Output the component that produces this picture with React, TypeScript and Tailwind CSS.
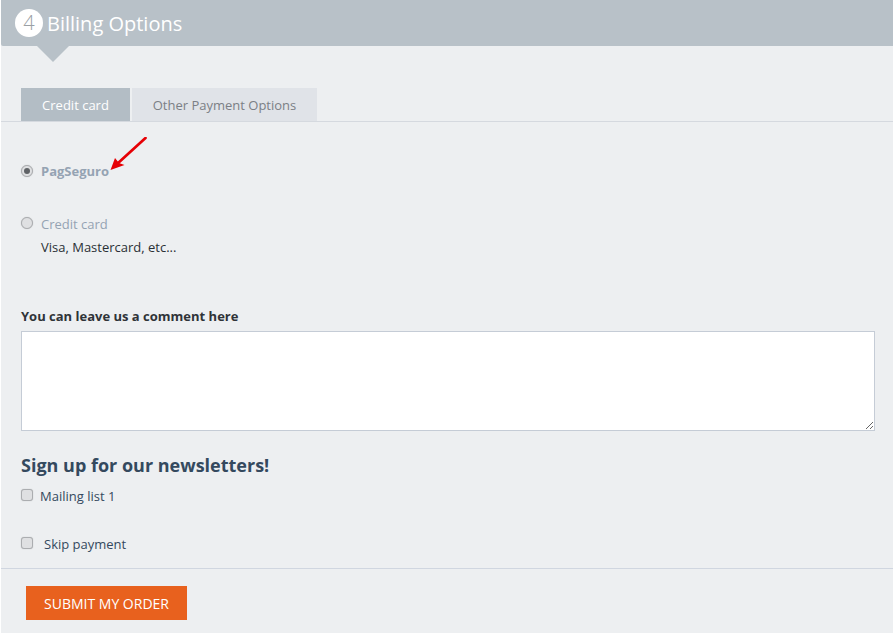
const font = "font-['Open_Sans',sans-serif]";
const control = 'm-0 h-3 w-3 shrink-0 appearance-none border border-[#abadb0] bg-[#dfe0e2] shadow-[0_0_1px_rgba(0,0,0,0.25)]';

function Radio({ checked }: { checked?: boolean }) {
	return (
		<span className="relative flex h-3 w-3 shrink-0 items-center justify-center">
			<input type="radio" name="pay" defaultChecked={checked} className={`${control} rounded-full`} />
			{checked && <span className="absolute h-[6px] w-[6px] rounded-full bg-[#5f6266]" />}
		</span>
	);
}

export default function App() {
	return (
		<div className={`${font} h-[633px] w-[893px] overflow-hidden border-l border-white bg-[#edeff1] text-[13px]`}>
			{/* Step header */}
			<div className="flex h-[46px] items-center gap-1 rounded-bl-[2px] bg-[#b8c1c8] pl-[14px]">
				<span className="flex h-7 w-7 items-center justify-center rounded-full bg-white text-[20px] font-light text-[#9aa0a5]">4</span>
				<h2 className="pt-[2px] text-[20px] leading-none text-white">Billing Options</h2>
			</div>
			<div className="ml-9 h-0 w-0 border-x-[16px] border-t-[16px] border-x-transparent border-t-[#b8c1c8]" />

			{/* Payment tabs */}
			<div className="mt-[26px] flex gap-[2px] border-b border-[#d5d9df] pl-5">
				<div className="flex h-[33px] w-[109px] items-center justify-center bg-[#b3bdc5] pt-[2px] text-white">Credit card</div>
				<div className="flex h-[33px] w-[185px] items-center justify-center bg-[#e0e3e8] pt-[2px] text-[#7b7f85]">Other Payment Options</div>
			</div>

			<div className="relative px-5 pt-[41px]">
				{/* Annotation arrow */}
				<svg className="absolute left-[108px] top-[15px]" width="40" height="36" viewBox="0 0 40 36">
					<path d="M36.5 1 L8 27" stroke="#e60005" strokeWidth="2.7" strokeLinecap="round" />
					<path d="M1.5 33 L6 21 L10 26 L15.5 28 Z" fill="#e60005" />
				</svg>

				<label className="flex h-4 items-center gap-2 font-bold text-[#95a3b3]">
					<Radio checked />
					<span className="pt-[2px]">PagSeguro</span>
				</label>
				<label className="mt-[37px] flex h-4 items-start gap-2 text-[#95a3b3]">
					<span className="mt-px"><Radio /></span>
					<span className="leading-4">Credit card</span>
				</label>
				<p className="mt-[7px] pl-5 leading-4 text-[#2a2f35]">Visa, Mastercard, etc...</p>

				<p className="mt-[53px] font-bold leading-4 text-[#2f3338]">You can leave us a comment here</p>
				<textarea className="mt-[7px] block h-[100px] w-[854px] border border-[#c5ccd6] bg-white" />

				<h3 className="mt-[22px] text-[18px] leading-6 font-bold text-[#34495e]">Sign up for our newsletters!</h3>
				<label className="mt-[12px] flex h-4 items-center gap-[7px] text-[#34495e]">
					<input type="checkbox" className={`${control} -translate-y-[2px] rounded-[3px]`} />
					Mailing list 1
				</label>
				<label className="mt-8 flex h-4 items-center gap-[11px] text-[#34495e]">
					<input type="checkbox" className={`${control} -translate-y-[2px] rounded-[3px]`} />
					Skip payment
				</label>
			</div>

			{/* Footer */}
			<div className="mt-[15px] border-t border-[#d0d6e0] pl-[25px] pt-[17px]">
				<button className="h-[34px] w-[161px] bg-[#e8611e] text-[14px] text-white">SUBMIT MY ORDER</button>
			</div>
		</div>
	);
}
